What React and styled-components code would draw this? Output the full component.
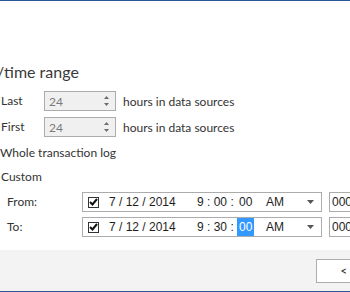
import React from 'react';
import styled, { createGlobalStyle } from 'styled-components';

const Global = createGlobalStyle`
  html, body {
    margin: 0;
    padding: 0;
    background: #ffffff;
    overflow: hidden;
  }
  body {
    font-family: Lato, "Liberation Sans", sans-serif;
    font-size: 12px;
    color: #333333;
  }
`;

const Dialog = styled.div`
  width: 350px;
  height: 292px;
  display: flex;
  flex-direction: column;
  border-top: 1px solid #2b5797;
  border-bottom: 1px solid #2b5797;
  box-sizing: border-box;
  overflow: hidden;
`;

const Body = styled.div`
  flex: 1;
  padding-top: 60px;
  display: flex;
  flex-direction: column;
`;

const Heading = styled.div`
  font-size: 16px;
  font-weight: 400;
  line-height: 21px;
  text-indent: -3px;
  color: #3a3a3a;
  margin-bottom: 9px;
  white-space: nowrap;
`;

const SpinRows = styled.div`
  display: flex;
  flex-direction: column;
  gap: 6px;
`;

const SpinRow = styled.div`
  display: grid;
  grid-template-columns: 44px 72px auto;
  align-items: center;
  height: 20px;
`;

const Label = styled.span`
  padding-left: ${p => p.indent || 1}px;
  line-height: 16px;
  white-space: nowrap;
`;

const Spin = styled.div`
  box-sizing: border-box;
  height: 20px;
  border: 1px solid #acacac;
  background: #f0f0f0;
  display: flex;
  align-items: center;
  justify-content: space-between;
  padding: 0 6px 0 4px;
  color: #7a7a7a;
`;

const Arrows = styled.div`
  display: flex;
  flex-direction: column;
  gap: 4px;
`;

const Suffix = styled.span`
  padding-left: 7px;
  white-space: nowrap;
`;

const Option = styled.div`
  line-height: 16px;
  margin-top: 8px;
  padding-left: ${p => p.indent || 0}px;
  white-space: nowrap;
`;

const PickerRows = styled.div`
  margin-top: 7px;
  display: flex;
  flex-direction: column;
  gap: 5px;
`;

const PickerRow = styled.div`
  display: grid;
  grid-template-columns: 82px 240px 7px 40px;
  align-items: center;
  height: 20px;
`;

const Picker = styled.div`
  box-sizing: border-box;
  height: 20px;
  border: 1px solid #acacac;
  display: flex;
  align-items: center;
  padding-left: 5px;
  font-family: "Liberation Sans", Arial, sans-serif;
  color: #1e1e1e;
  white-space: nowrap;
`;

const Check = styled.span`
  box-sizing: border-box;
  width: 11px;
  height: 11px;
  border: 1px solid #333;
  display: flex;
  align-items: center;
  justify-content: center;
  margin-right: 10px;
`;

const DatePart = styled.span`
  width: 88px;
`;

const TimePart = styled.span`
  width: 69px;
`;

const Sel = styled.span`
  background: ${p => (p.on ? '#3399ff' : 'transparent')};
  color: ${p => (p.on ? '#fff' : 'inherit')};
  padding: 2px 2px;
`;

const Meridiem = styled.span`
  flex: 1;
`;

const Drop = styled.span`
  width: 14px;
  display: flex;
  align-items: center;
`;

const Millis = styled.div`
  box-sizing: border-box;
  height: 20px;
  border: 1px solid #acacac;
  border-right: none;
  padding-left: 2px;
  display: flex;
  align-items: center;
  font-family: "Liberation Sans", Arial, sans-serif;
  color: #1e1e1e;
`;

const Footer = styled.div`
  height: 41px;
  background: #f3f3f3;
  display: flex;
  align-items: center;
  gap: 8px;
  padding-left: 316px;
  overflow: hidden;
`;

const Button = styled.div`
  flex: none;
  box-sizing: border-box;
  width: 84px;
  height: 24px;
  background: #fff;
  border: 1px solid #adadad;
  display: flex;
  align-items: center;
  justify-content: center;
  color: #1e1e1e;
`;

const Tri = ({ up }) => (
  <svg width="5" height="3" viewBox="0 0 5 3">
    <path d={up ? 'M2.5 0 L5 3 L0 3 Z' : 'M0 0 L5 0 L2.5 3 Z'} fill="#6d6d6d" />
  </svg>
);

const Tick = () => (
  <svg width="9" height="8" viewBox="0 0 9 8">
    <path d="M1 4 L3.5 6.5 L8 1" stroke="#111" strokeWidth="2" fill="none" />
  </svg>
);

const Spinner = ({ value }) => (
  <Spin>
    <span>{value}</span>
    <Arrows>
      <Tri up />
      <Tri />
    </Arrows>
  </Spin>
);

const DateTime = ({ minutes, selected }) => (
  <Picker>
    <Check><Tick /></Check>
    <DatePart>7 / 12 / 2014</DatePart>
    <TimePart>
      9 : {minutes} : <Sel on={selected}>00</Sel>
    </TimePart>
    <Meridiem>AM</Meridiem>
    <Drop>
      <svg width="7" height="4" viewBox="0 0 7 4">
        <path d="M0 0 L7 0 L3.5 4 Z" fill="#555" />
      </svg>
    </Drop>
  </Picker>
);

export default function App() {
  return (
    <>
      <Global />
      <Dialog>
        <Body>
          <Heading>/time range</Heading>
          <SpinRows>
            <SpinRow>
              <Label>Last</Label>
              <Spinner value="24" />
              <Suffix>hours in data sources</Suffix>
            </SpinRow>
            <SpinRow>
              <Label>First</Label>
              <Spinner value="24" />
              <Suffix>hours in data sources</Suffix>
            </SpinRow>
          </SpinRows>
          <Option>Whole transaction log</Option>
          <Option indent={1}>Custom</Option>
          <PickerRows>
            <PickerRow>
              <Label indent={7}>From:</Label>
              <DateTime minutes="00" />
              <span />
              <Millis>000</Millis>
            </PickerRow>
            <PickerRow>
              <Label indent={7}>To:</Label>
              <DateTime minutes="30" selected />
              <span />
              <Millis>000</Millis>
            </PickerRow>
          </PickerRows>
        </Body>
        <Footer>
          <Button>&lt; Back</Button>
          <Button>Next &gt;</Button>
        </Footer>
      </Dialog>
    </>
  );
}
